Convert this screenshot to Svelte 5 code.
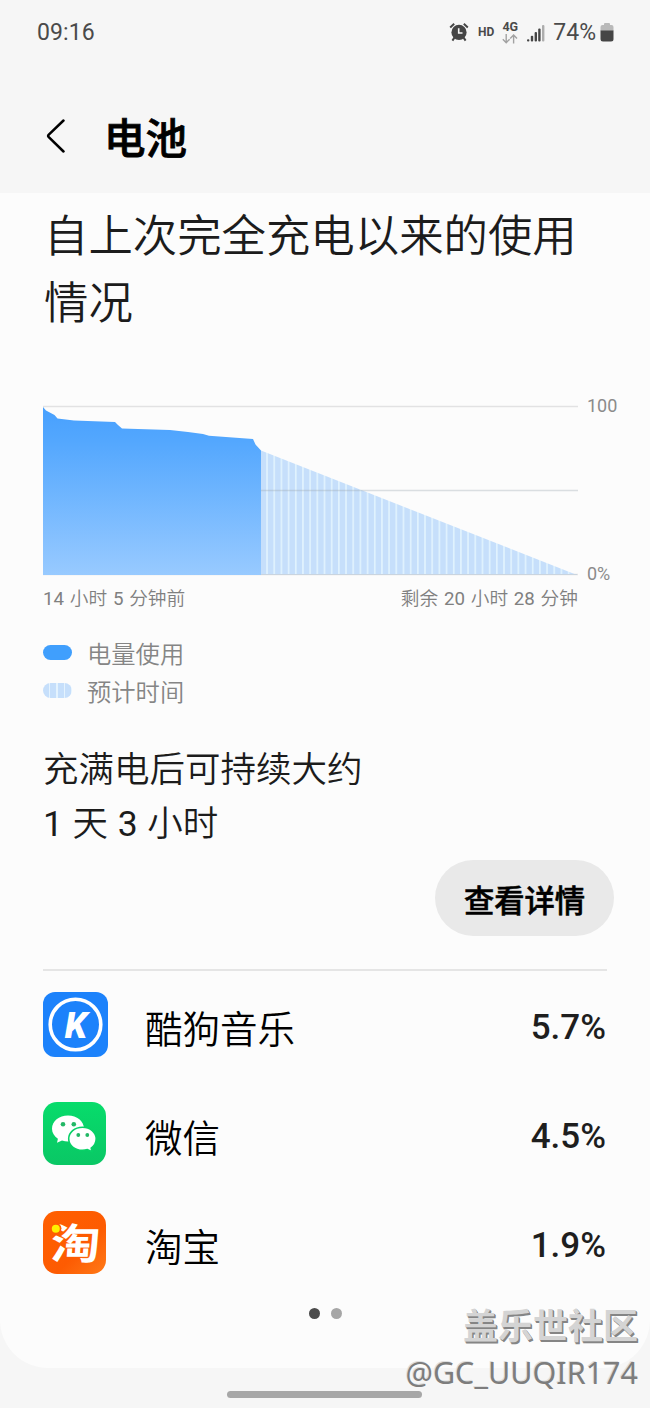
<script>
	const apps = [
		{ id: 'kugou', name: '酷狗音乐', usage: '5.7%' },
		{ id: 'wechat', name: '微信', usage: '4.5%' },
		{ id: 'taobao', name: '淘宝', usage: '1.9%' }
	];

	// battery level samples in chart coordinates, 0..168 from full to empty
	const history = [
		[0, 0],
		[3, 3.5],
		[11.5, 8],
		[14.5, 11.5],
		[31, 13.5],
		[72, 15],
		[75, 18],
		[79, 21.5],
		[127, 23],
		[145, 25],
		[160, 27],
		[166, 28.8],
		[210, 32],
		[212.5, 37.5],
		[218, 43.5]
	];

	const area = [[0, 168], ...history, [218, 168]].map((p) => p.join(',')).join(' ');
</script>

<div class="screen">
	<div class="status">
		<span class="clock">09:16</span>
		<svg class="alarm" viewBox="0 0 20 20" width="20" height="20">
			<circle cx="10" cy="10.4" r="7.6" fill="#454545" />
			<path d="M1.2 5.4 5.2 1.8M18.8 5.4 14.8 1.8M5.4 15.6 3.4 18.6M14.6 15.6l2 3" stroke="#454545" stroke-width="2" fill="none" />
			<path d="M9.7 6.2V11h3.8" stroke="#f6f6f6" stroke-width="1.6" fill="none" />
		</svg>
		<span class="hd">HD</span>
		<span class="net">
			<span>4G</span>
			<svg viewBox="0 0 16 10" width="16" height="10" fill="none" stroke="#a2a2a2" stroke-width="1.4">
				<path d="M4.2 0v8.6M.8 5.2l3.4 3.6 3.4-3.6M11.6 9.6V1M8.2 4.6 11.6 1 15 4.6" />
			</svg>
		</span>
		<svg class="signal" viewBox="0 0 18 18" width="18" height="18" fill="#454545">
			<rect x="0" y="15.2" width="2.4" height="2.4" rx="1" />
			<rect x="3.8" y="11.8" width="2.4" height="5.8" rx="1" />
			<rect x="7.6" y="8" width="2.4" height="9.6" rx="1" />
			<rect x="11.2" y="4.4" width="2.4" height="13.2" rx="1" />
			<rect x="15" y="1" width="2.4" height="16.6" rx="1" fill="#adadad" />
		</svg>
		<span class="percent">74%</span>
		<svg class="cell" viewBox="0 0 14 19" width="14" height="19">
			<path d="M4 2V1q0-1 1-1h4q1 0 1 1v1h1.5Q13.5 2 13.5 4v4H.5V4Q.5 2 2.5 2z" fill="#b9b9b9" />
			<path d="M.5 7.5h13V16q0 2.5-2.5 2.5H3Q.5 18.5.5 16z" fill="#454545" />
		</svg>
	</div>

	<header>
		<svg class="back" viewBox="0 0 20 36" width="20" height="36">
			<path d="M17.5 2.5 2.8 16.6q-1.3 1.3 0 2.6L17.5 33.5" fill="none" stroke="#000" stroke-width="2.5" stroke-linecap="round" />
		</svg>
		<h1>电池</h1>
	</header>

	<main>
		<h2>自上次完全充电以来的使用情况</h2>

		<div class="chart">
			<svg viewBox="0 -2 535 172" width="535" height="172">
				<defs>
					<linearGradient id="used" x1="0" y1="0" x2="0" y2="1">
						<stop offset="0" stop-color="#47a0fe" />
						<stop offset="0.2" stop-color="#53a7fe" />
						<stop offset="1" stop-color="#98caff" />
					</linearGradient>
					<pattern id="stripes" x="223.2" y="0" width="7.18" height="10" patternUnits="userSpaceOnUse">
						<rect width="7.18" height="10" fill="#c6dffb" />
						<rect width="1.7" height="10" fill="#e0f2fe" />
					</pattern>
				</defs>
				<path d="M0 -.5h535M0 167.5h535" stroke="#e2e2e3" stroke-width="1.6" />
				<path d="M218 43.5 534 168H218z" fill="url(#stripes)" />
				<path d="M218 83.5h317" stroke="#9aa5b0" stroke-opacity=".35" stroke-width="1.5" />
				<path d="M218 167.5h316" stroke="#c9d4df" stroke-width="1.2" />
				<polygon points={area} fill="url(#used)" />
			</svg>
			<div class="scale">
				<span>100</span>
				<span>0%</span>
			</div>
		</div>
		<div class="range">
			<span><b>14</b> 小时 <b>5</b> 分钟前</span>
			<span>剩余 <b>20</b> 小时 <b>28</b> 分钟</span>
		</div>

		<ul class="legend">
			<li><i class="chip"></i>电量使用</li>
			<li><i class="chip estimated"></i>预计时间</li>
		</ul>

		<p class="duration">充满电后可持续大约<br /><b>1</b> 天 <b>3</b> 小时</p>

		<button>查看详情</button>

		<ul class="apps">
			{#each apps as app}
				<li>
					<span class="icon">
						{#if app.id === 'kugou'}
							<svg viewBox="0 0 65 65" width="65" height="65">
								<rect width="65" height="65" rx="12" fill="#1c82fb" />
								<circle cx="32.5" cy="32.5" r="25.3" fill="none" stroke="#fff" stroke-width="3.6" />
								<text x="33" y="45.5" text-anchor="middle" class="k">K</text>
							</svg>
						{:else if app.id === 'wechat'}
							<svg viewBox="0 0 63 63" width="63" height="63">
								<defs>
									<linearGradient id="green" x1="0" y1="0" x2="0" y2="1">
										<stop offset="0" stop-color="#07dc6b" />
										<stop offset="1" stop-color="#0ac765" />
									</linearGradient>
								</defs>
								<rect width="63" height="63" rx="14" fill="url(#green)" />
								<path d="M25 13.5c-9 0-16 5.8-16 13.2 0 4.1 2.3 7.5 5.9 10l-.9 4 5-2.2c2 .7 4 1 6 1 9 0 16-5.6 16-12.9S34 13.5 25 13.5z" fill="#fff" />
								<path d="M39.5 25.2c-7.9 0-13.8 5-13.8 11.6s5.9 11.5 13.8 11.5c1.7 0 3.3-.2 4.9-.7l4.6 2.1-.8-3.6c3.1-2.2 5-5.5 5-9.3 0-6.6-5.9-11.6-13.7-11.6z" fill="#fff" stroke="#08d167" stroke-width="1.6" />
								<g fill="#23b866">
									<circle cx="20" cy="22.3" r="2.3" />
									<circle cx="30.8" cy="22.3" r="2.3" />
									<circle cx="35.3" cy="33" r="1.9" />
									<circle cx="44.3" cy="33" r="1.9" />
								</g>
							</svg>
						{:else}
							<svg viewBox="0 0 63 63" width="63" height="63">
								<defs>
									<linearGradient id="orange" x1="0" y1="0" x2="1" y2="1">
										<stop offset="0" stop-color="#ff5f00" />
										<stop offset="0.6" stop-color="#fd5b02" />
										<stop offset="1" stop-color="#ff7a18" />
									</linearGradient>
								</defs>
								<rect width="63" height="63" rx="14" fill="url(#orange)" />
								<text transform="translate(31.5 47.5) skewX(-4) scale(1.18 1)" text-anchor="middle" class="tao">淘</text>
								<circle cx="13" cy="17.2" r="5.4" fill="#fe5d01" />
								<circle cx="12.8" cy="17.8" r="4" fill="#fff000" />
							</svg>
						{/if}
					</span>
					<span class="name">{app.name}</span>
					<span class="usage">{app.usage}</span>
				</li>
			{/each}
		</ul>

		<div class="pager"><i class="active"></i><i></i></div>
	</main>

	<div class="home"></div>

	<div class="watermark">
		<div class="community">盖乐世社区</div>
		<div class="user">@GC_UUQIR174</div>
	</div>
</div>

<style>
	:global(body) {
		background: #f6f6f6;
	}

	.screen {
		position: relative;
		display: flex;
		flex-direction: column;
		width: 650px;
		height: 1408px;
		overflow: hidden;
		background: #f6f6f6;
		color: #1c1c1c;
		font-family: Roboto, 'Noto Sans CJK SC', sans-serif;
	}

	h1,
	h2,
	p,
	ul {
		margin: 0;
		padding: 0;
		font-weight: 400;
		list-style: none;
	}

	b {
		font-weight: 400;
	}

	svg {
		display: block;
		flex: none;
	}

	.status {
		display: flex;
		align-items: center;
		height: 66px;
		padding: 0 36px 0 37px;
		box-sizing: border-box;
		color: #4a4a4a;
		font-size: 23px;
		line-height: 30px;
	}

	.clock {
		flex: 1;
		letter-spacing: 0.1px;
	}

	.alarm,
	.hd,
	.net {
		margin-top: -2px;
	}

	.hd {
		margin-left: 9px;
		font-size: 12px;
		font-weight: 700;
	}

	.net {
		display: flex;
		flex-direction: column;
		align-items: center;
		gap: 1px;
		margin-left: 8px;
		font-size: 12.5px;
		font-weight: 700;
		line-height: 12px;
	}

	.signal {
		margin-left: 9px;
	}

	.percent {
		margin-left: 8px;
	}

	.cell {
		margin: -2px 0 0 4px;
	}

	header {
		display: flex;
		align-items: center;
		height: 127px;
		padding: 0 0 0 46px;
	}

	.back {
		margin-top: 12px;
	}

	h1 {
		margin: 20px 0 0 38px;
		color: #000;
		font-size: 41.5px;
		font-weight: 500;
		line-height: 60px;
		-webkit-text-stroke: 0.8px #000;
	}

	main {
		display: flex;
		flex-direction: column;
		height: 1175px;
		padding: 0 43px;
		box-sizing: border-box;
		border-radius: 0 0 48px 48px;
		background: #fcfcfc;
	}

	h2 {
		width: 550px;
		margin: 11px 0 0 1px;
		font-size: 44.4px;
		font-weight: 350;
		line-height: 67px;
	}

	.chart {
		display: flex;
		margin: 67px -43px 0 0;
	}

	.scale {
		display: flex;
		flex-direction: column;
		justify-content: space-between;
		margin: -10px 0 -8px 9px;
		color: #8b8b8b;
		font-size: 18px;
		line-height: 22px;
	}

	.range {
		display: flex;
		justify-content: space-between;
		width: 535px;
		margin-top: 9px;
		color: #808080;
		font-size: 18.7px;
		font-weight: 350;
		line-height: 26px;
		word-spacing: 1.2px;
	}

	.legend {
		margin-top: 24px;
		color: #858585;
		font-size: 24.3px;
		font-weight: 350;
		line-height: 38px;
	}

	.legend li {
		display: flex;
		align-items: center;
	}

	.chip {
		width: 29px;
		height: 15px;
		margin: -5px 15px 0 0;
		border-radius: 8px;
		background: #409ffd;
	}

	.estimated {
		background: repeating-linear-gradient(90deg, #c6dffb 0 6px, #e4f3fe 6px 7.4px);
	}

	.duration {
		margin-top: 31px;
		font-size: 35.5px;
		font-weight: 350;
		line-height: 54px;
		word-spacing: 1px;
	}

	button {
		align-self: flex-end;
		width: 179px;
		height: 76px;
		margin: 9px -7px 0 0;
		border: 0;
		padding: 2px 0 0;
		border-radius: 38px;
		background: #e9e9e9;
		color: #000;
		font-family: inherit;
		font-size: 30.3px;
		font-weight: 500;
		-webkit-text-stroke: 0.6px #000;
	}

	.apps {
		margin-top: 33px;
		border-top: 2px solid #e5e5e5;
	}

	.apps li {
		display: flex;
		align-items: center;
		height: 109px;
		color: #000;
		font-size: 37.5px;
		font-weight: 350;
	}

	.icon {
		display: flex;
		width: 102px;
		margin-top: -3px;
	}

	.name {
		flex: 1;
		padding-top: 2px;
	}

	.usage {
		padding: 4px 1px 0 0;
		color: #1e1e1e;
		font-size: 35px;
		font-weight: 500;
	}

	.k {
		fill: #fff;
		font: italic 900 36px Roboto, sans-serif;
	}

	.tao {
		fill: #fff;
		font: 700 42px 'Noto Sans CJK SC', sans-serif;
	}

	.pager {
		display: flex;
		justify-content: center;
		gap: 11px;
		margin-top: 10px;
	}

	.pager i {
		width: 11px;
		height: 11px;
		border-radius: 50%;
		background: #a6a6a6;
	}

	.pager .active {
		background: #4b4b4b;
	}

	.home {
		width: 195px;
		height: 7px;
		margin: 23px 0 0 227px;
		border-radius: 4px;
		background: #a7a7a7;
	}

	.watermark {
		position: absolute;
		right: 12px;
		bottom: 14px;
		text-align: right;
		white-space: nowrap;
	}

	.community {
		color: #d4d4d4;
		font-size: 35px;
		font-weight: 700;
		line-height: 44px;
		text-shadow: 1px 1px 0 #858585, 1.5px 1.5px 0 #858585;
	}

	.user {
		color: #7d7d7d;
		font-family: 'Noto Sans', sans-serif;
		font-size: 30.5px;
		line-height: 44px;
		text-shadow: -1px -1px 0 #dedede;
	}
</style>
